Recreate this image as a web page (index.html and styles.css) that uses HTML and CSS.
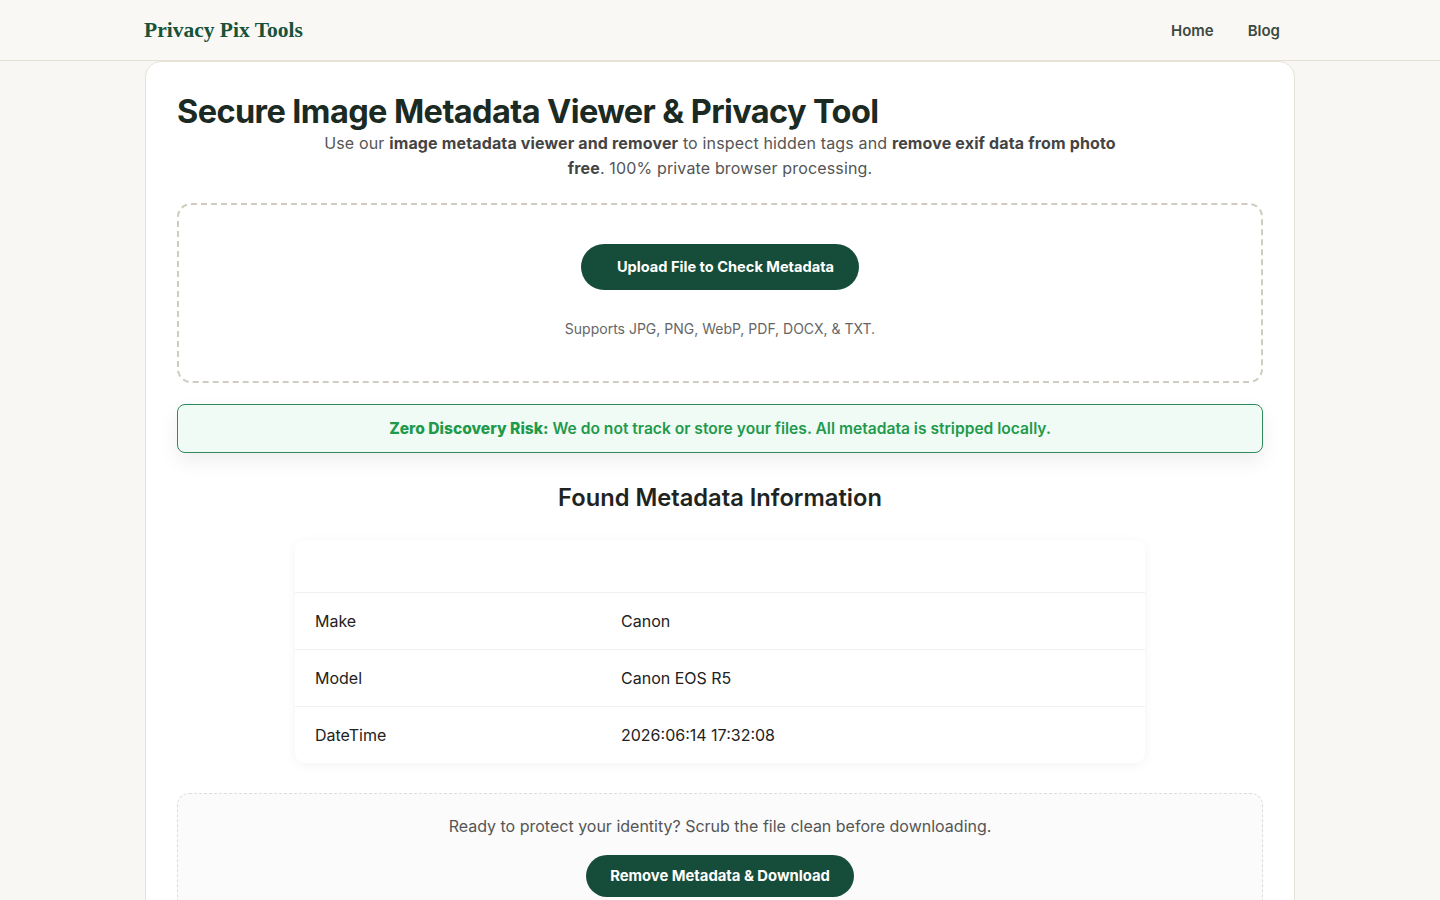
FILE: index.html
```html
<!DOCTYPE html>
<html lang="en">
<head>
    <meta charset="UTF-8">
    <meta name="viewport" content="width=device-width, initial-scale=1.0">
    <title>Privacy Pix Tools - Image Metadata Viewer</title>
    <link rel="stylesheet" href="styles.css">
</head>
<body>
    <header class="site-header">
        <div class="header-inner">
            <a class="logo" href="#">Privacy Pix Tools</a>
            <nav class="nav">
                <a href="#">Home</a>
                <a href="#">Blog</a>
            </nav>
        </div>
    </header>

    <main class="card">
        <h1 class="title">Secure Image Metadata Viewer &amp; Privacy Tool</h1>
        <p class="intro">Use our <strong>image metadata viewer and remover</strong> to inspect hidden tags and <strong>remove exif data from photo free</strong>. 100% private browser processing.</p>

        <!-- Upload area -->
        <div class="upload-box">
            <button class="btn btn-upload">Upload File to Check Metadata</button>
            <p class="supports">Supports JPG, PNG, WebP, PDF, DOCX, &amp; TXT.</p>
        </div>

        <div class="notice"><strong>Zero Discovery Risk:</strong> We do not track or store your files. All metadata is stripped locally.</div>

        <h2 class="section-title">Found Metadata Information</h2>

        <table class="meta-table">
            <thead>
                <tr><th></th><th></th></tr>
            </thead>
            <tbody>
                <tr><td>Make</td><td>Canon</td></tr>
                <tr><td>Model</td><td>Canon EOS R5</td></tr>
                <tr><td>DateTime</td><td>2026:06:14 17:32:08</td></tr>
            </tbody>
        </table>

        <!-- Download area -->
        <div class="download-box">
            <p>Ready to protect your identity? Scrub the file clean before downloading.</p>
            <button class="btn btn-download">Remove Metadata &amp; Download</button>
        </div>
    </main>
</body>
</html>
```

FILE: styles.css
```css
body {
    margin: 0;
    font-family: Inter, "Noto Sans", sans-serif;
    background-color: #f9f7f3;
    color: #222;
}
.site-header {
    background-color: #faf8f4;
    border-bottom: 1px solid #e4e0d6;
    height: 60px;
}
.header-inner {
    max-width: 1136px;
    margin: 0 auto;
    height: 100%;
    display: flex;
    align-items: center;
    justify-content: space-between;
    padding: 0 32px 0 16px;
}
.logo {
    font-family: "Liberation Serif", "DejaVu Serif", serif;
    font-weight: bold;
    font-size: 21.5px;
    color: #16533a;
    text-decoration: none;
}
.nav {
    display: flex;
    gap: 34px;
}
.nav a {
    color: #3c4a42;
    font-weight: 600;
    font-size: 15px;
    text-decoration: none;
}
.card {
    width: 1150px;
    box-sizing: border-box;
    margin: 0 auto;
    background-color: #fff;
    border: 1px solid #e6e2d8;
    border-radius: 16px;
    padding: 29px 31px 40px;
}
.title {
    margin: 0;
    font-size: 32.5px;
    font-weight: 700;
    letter-spacing: -0.6px;
    color: #1b2a22;
    line-height: 42px;
}
.intro {
    max-width: 800px;
    margin: -2px auto 22px;
    text-align: center;
    color: #555;
    font-size: 16px;
    line-height: 25px;
    letter-spacing: 0.15px;
}
.intro strong {
    color: #444;
}
.upload-box {
    border: 2px dashed #d0ccc0;
    border-radius: 14px;
    padding: 39px 20px 44px;
    text-align: center;
}
.btn {
    border: none;
    border-radius: 999px;
    background-color: #164d3a;
    color: #fff;
    font-family: Inter, sans-serif;
    font-weight: 700;
    cursor: pointer;
}
.btn-upload {
    padding: 14px 25px 14px 36px;
    font-size: 14.6px;
}
.supports {
    margin: 30px 0 0;
    font-size: 14px;
    color: #666;
}
.notice {
    margin-top: 21px;
    border: 1px solid #2f8a5c;
    background-color: #effbf4;
    border-radius: 8px;
    padding: 14px 20px;
    text-align: center;
    color: #1f9a4c;
    font-size: 15.6px;
    font-weight: 600;
    box-shadow: 0 8px 20px rgba(0, 0, 0, 0.07);
}
.notice strong {
    font-weight: 800;
}
.section-title {
    text-align: center;
    font-size: 23.7px;
    font-weight: 600;
    color: #1f2421;
    margin: 30px 0 28px;
}
.meta-table {
    width: 850px;
    margin: 0 auto;
    border-collapse: collapse;
    border-radius: 10px;
    box-shadow: 0 2px 12px rgba(0, 0, 0, 0.05);
    font-size: 16px;
}
.meta-table th {
    height: 50px;
    border-bottom: 1px solid #f0f0f0;
}
.meta-table td {
    height: 56px;
    padding: 0 20px;
    border-bottom: 1px solid #f0f0f0;
    color: #222;
}
.meta-table td:first-child {
    width: 266px;
}
.meta-table tr:last-child td {
    border-bottom: none;
}
.download-box {
    margin-top: 30px;
    border: 1px dashed #ddd;
    background-color: #fbfbfb;
    border-radius: 12px;
    padding: 22px 20px 30px;
    text-align: center;
}
.download-box p {
    margin: 0 0 19px;
    font-size: 16px;
    color: #555;
}
.btn-download {
    padding: 12px 24px;
    font-size: 14.8px;
}
```
